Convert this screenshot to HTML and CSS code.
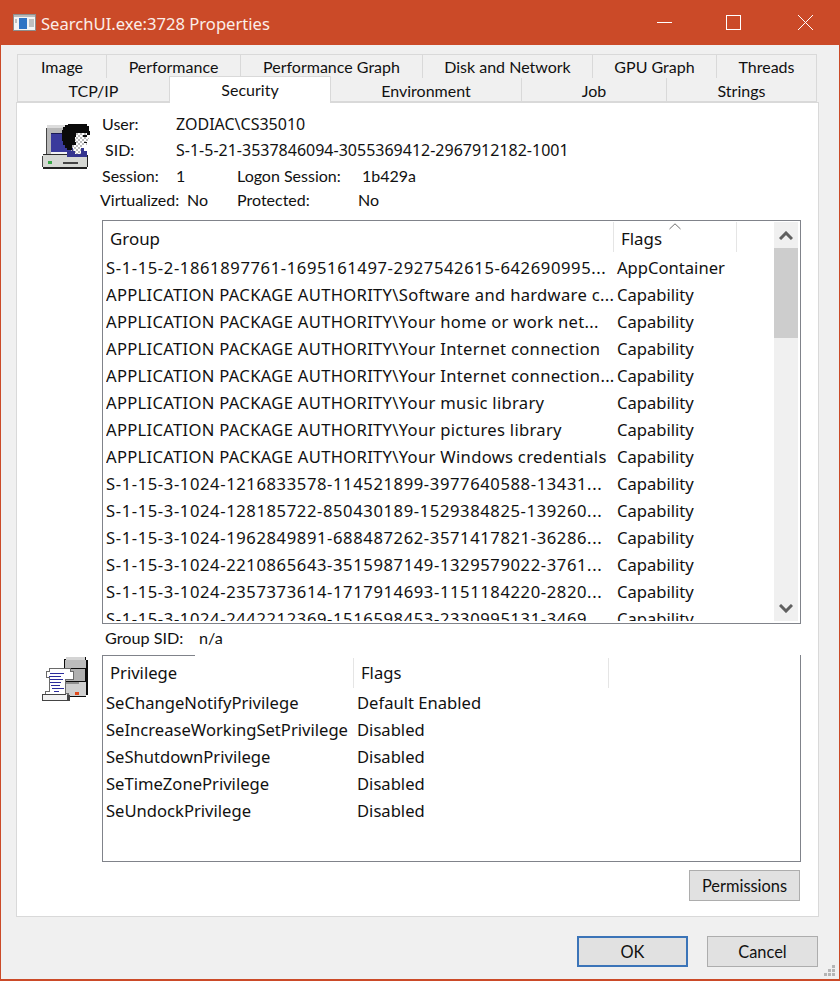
FILE: index.html
```html
<!DOCTYPE html>
<html lang="en">
<head>
<meta charset="utf-8">
<title>SearchUI.exe:3728 Properties</title>
<link rel="stylesheet" href="styles.css">
</head>
<body>
<div class="window">
  <header class="titlebar">
    <svg class="app-icon" width="24" height="18" viewBox="0 0 24 18">
      <rect x="0.5" y="0.5" width="22" height="16" fill="#f4f4f4" stroke="#8d8d8d"/>
      <rect x="1" y="1" width="21" height="2" fill="#b9b9b9"/>
      <rect x="6" y="4" width="8" height="11" fill="#2f74c4"/>
      <path d="M16 6h5M16 8h5M16 10h5M16 12h5M2 6h2M2 8h2" stroke="#8a8a8a"/>
    </svg>
    <span class="title">SearchUI.exe:3728 Properties</span>
    <svg class="controls" width="156" height="16" viewBox="0 0 156 16" fill="none" stroke="#fff">
      <path d="M0 7.5h15"/>
      <rect x="69.5" y="0.5" width="14" height="14"/>
      <path d="M141 0l15 15M156 0l-15 15"/>
    </svg>
  </header>

  <div class="content">
    <nav class="tabs">
      <div class="tab-row">
        <div class="tab w89">Image</div>
        <div class="tab w134">Performance</div>
        <div class="tab w182">Performance Graph</div>
        <div class="tab w170">Disk and Network</div>
        <div class="tab w124">GPU Graph</div>
        <div class="tab w101">Threads</div>
      </div>
      <div class="tab-row">
        <div class="tab w152">TCP/IP</div>
        <div class="tab tab-active w161">Security</div>
        <div class="tab w191">Environment</div>
        <div class="tab w145">Job</div>
        <div class="tab w150">Strings</div>
      </div>
    </nav>

    <section class="panel">
      <div class="top-section">
        <div class="icon-col">
          <svg class="user-icon" width="48" height="50" viewBox="0 0 48 50" shape-rendering="crispEdges">
            <defs>
              <pattern id="dither" width="4" height="4" patternUnits="userSpaceOnUse">
                <rect width="4" height="4" fill="#bdbdbd"/>
                <rect width="2" height="2" fill="#fff"/>
                <rect x="2" y="2" width="2" height="2" fill="#fff"/>
              </pattern>
            </defs>
            <rect x="5" y="5" width="27" height="30" fill="#b8b8b8"/>
            <rect x="5" y="4" width="27" height="3" fill="#dcdcdc"/>
            <rect x="4" y="7" width="1" height="28" fill="#444"/>
            <rect x="9" y="12" width="20" height="19" fill="#3a3a9c"/>
            <rect x="9" y="12" width="20" height="1" fill="#1b1b55"/>
            <rect x="9" y="31" width="20" height="2" fill="#f2f2f2"/>
            <rect x="1" y="33" width="44" height="14" fill="#d6d8d4"/>
            <rect x="1" y="33" width="44" height="1" fill="#2a2a2a"/>
            <rect x="1" y="46" width="44" height="2" fill="#222"/>
            <rect x="0" y="35" width="1" height="11" fill="#444"/>
            <rect x="45" y="34" width="1" height="12" fill="#222"/>
            <rect x="6" y="40" width="4" height="3" fill="#3aa84a"/>
            <rect x="21" y="41" width="15" height="2" fill="#444"/>
            <path d="M25 36h20v-6h-3v-3h-12v3h-5z" fill="#35358f"/>
            <path d="M26 3h19v2h2v5h1v4h-6v10h-12v5h-5v-2h-2v-3h-2v-4h-1v-11h1v-3h2v-2h3z" fill="#0b0b0b"/>
            <path d="M34 12h11v5h2v3h-2v4h-3v2h-3v7h-6v-3h-2v-4h3v-5h-1v-5h1z" fill="url(#dither)"/>
            <path d="M41 14h4v2h-4zM42 21h3v1h-3z" fill="#111"/>
          </svg>
        </div>
        <div class="info">
          <div class="info-row row-user"><span class="label lbl-user">User:</span><span class="val-big">ZODIAC\CS35010</span></div>
          <div class="info-row row-sid"><span class="label lbl-sid">SID:</span><span class="val-big">S-1-5-21-3537846094-3055369412-2967912182-1001</span></div>
          <div class="info-row row-session"><span class="label lbl-session">Session:</span><span class="val-session">1</span><span class="label lbl-logon">Logon Session:</span><span>1b429a</span></div>
          <div class="info-row row-virt"><span class="label lbl-virt">Virtualized:</span><span class="val-virt">No</span><span class="label lbl-prot">Protected:</span><span>No</span></div>
        </div>
      </div>

      <div class="group-box">
        <div class="list">
          <div class="list-head">
            <div class="th th-group">Group</div>
            <div class="th th-flags">Flags<svg class="sort" width="12" height="7" viewBox="0 0 12 7" fill="none" stroke="#6e6e6e"><path d="M0.5 6L6 0.8L11.5 6"/></svg></div>
          </div>
          <div class="list-body">
            <div class="row"><span class="cell-name sid-text">S-1-15-2-1861897761-1695161497-2927542615-642690995...</span><span>AppContainer</span></div>
            <div class="row"><span class="cell-name app-text">APPLICATION PACKAGE AUTHORITY\Software and hardware c...</span><span>Capability</span></div>
            <div class="row"><span class="cell-name app-text">APPLICATION PACKAGE AUTHORITY\Your home or work net...</span><span>Capability</span></div>
            <div class="row"><span class="cell-name app-text">APPLICATION PACKAGE AUTHORITY\Your Internet connection</span><span>Capability</span></div>
            <div class="row"><span class="cell-name app-text">APPLICATION PACKAGE AUTHORITY\Your Internet connection...</span><span>Capability</span></div>
            <div class="row"><span class="cell-name app-text">APPLICATION PACKAGE AUTHORITY\Your music library</span><span>Capability</span></div>
            <div class="row"><span class="cell-name app-text">APPLICATION PACKAGE AUTHORITY\Your pictures library</span><span>Capability</span></div>
            <div class="row"><span class="cell-name app-text">APPLICATION PACKAGE AUTHORITY\Your Windows credentials</span><span>Capability</span></div>
            <div class="row"><span class="cell-name sid-text">S-1-15-3-1024-1216833578-114521899-3977640588-13431...</span><span>Capability</span></div>
            <div class="row"><span class="cell-name sid-text">S-1-15-3-1024-128185722-850430189-1529384825-139260...</span><span>Capability</span></div>
            <div class="row"><span class="cell-name sid-text">S-1-15-3-1024-1962849891-688487262-3571417821-36286...</span><span>Capability</span></div>
            <div class="row"><span class="cell-name sid-text">S-1-15-3-1024-2210865643-3515987149-1329579022-3761...</span><span>Capability</span></div>
            <div class="row"><span class="cell-name sid-text">S-1-15-3-1024-2357373614-1717914693-1151184220-2820...</span><span>Capability</span></div>
            <div class="row"><span class="cell-name sid-text">S-1-15-3-1024-2442212369-1516598453-2330995131-3469...</span><span>Capability</span></div>
          </div>
        </div>
        <div class="scrollbar">
          <div class="sb-btn"><svg width="14" height="9" viewBox="0 0 14 9" fill="none" stroke="#606060" stroke-width="3"><path d="M1 8L7 2L13 8"/></svg></div>
          <div class="sb-thumb"></div>
          <div class="sb-track"></div>
          <div class="sb-btn"><svg width="14" height="9" viewBox="0 0 14 9" fill="none" stroke="#606060" stroke-width="3"><path d="M1 1L7 7L13 1"/></svg></div>
        </div>
      </div>

      <div class="group-sid"><span class="lbl-gsid">Group SID:</span><span>n/a</span></div>

      <div class="priv-section">
        <div class="icon-col">
          <svg class="priv-icon" width="48" height="48" viewBox="0 0 48 48" shape-rendering="crispEdges">
            <path d="M22 4h2v-2h20v3h2v35h-2v2h-22z" fill="#0c0c0c"/>
            <path d="M24 2h19v3h-19z" fill="#d4d4d4"/>
            <path d="M23 5h21v8h-21z" fill="#bcbcbc"/>
            <path d="M24 14h19v12h-19z" fill="#b0b0b0"/>
            <path d="M23 27h21v14h-21z" fill="#cfcfcf"/>
            <path d="M23 27h14v2h-14z" fill="#8f8f8f"/>
            <rect x="33" y="37" width="4" height="3" fill="#e04a1c"/>
            <path d="M7.5 13.5h21v3h3v8h-8v14h3v1h-23v-3h4v-14h-3v-6h3z" fill="#fff" stroke="#6a6a6a"/>
            <path d="M8 18h14M7 21h12M8 24h13M8 27h11M9 30h9M10 33h12M12 36h5" stroke="#2c2c9c"/>
            <path d="M1 39h24v6h-24z" fill="#f2f2f2"/>
            <path d="M0 39h24v1h-24zM0 45h28v1h-28zM0 40h1v5h-1zM25 40h3v5h-3z" fill="#444"/>
          </svg>
        </div>
        <div class="priv-box">
          <div class="priv-topline"></div>
          <div class="priv-head">
            <div class="th th-priv">Privilege</div>
            <div class="th th-pflags">Flags</div>
          </div>
          <div class="row"><span class="cell-priv">SeChangeNotifyPrivilege</span><span>Default Enabled</span></div>
          <div class="row"><span class="cell-priv">SeIncreaseWorkingSetPrivilege</span><span>Disabled</span></div>
          <div class="row"><span class="cell-priv">SeShutdownPrivilege</span><span>Disabled</span></div>
          <div class="row"><span class="cell-priv">SeTimeZonePrivilege</span><span>Disabled</span></div>
          <div class="row"><span class="cell-priv">SeUndockPrivilege</span><span>Disabled</span></div>
        </div>
      </div>

      <div class="perm-row"><button class="btn btn-perm">Permissions</button></div>
    </section>

    <footer class="footer">
      <button class="btn btn-ok">OK</button>
      <button class="btn btn-cancel">Cancel</button>
    </footer>
    <svg class="grip" width="12" height="12" viewBox="0 0 12 12" fill="#b5b5b5" shape-rendering="crispEdges">
      <path d="M8 0h3v3h-3zM4 4h3v3h-3zM8 4h3v3h-3zM0 8h3v3h-3zM4 8h3v3h-3zM8 8h3v3h-3z"/>
    </svg>
  </div>
</div>
</body>
</html>
```

FILE: styles.css
```css
* { box-sizing: border-box; }
html, body { margin: 0; padding: 0; background: #f0f0f0; }
body {
  font-family: "Noto Sans", "Open Sans", sans-serif;
  font-size: 16.6px;
  color: #111;
  width: 840px;
  height: 981px;
  overflow: hidden;
}
.window {
  position: relative;
  width: 840px;
  height: 981px;
  border: 1px solid #cb4a28;
  border-top: 0;
  border-bottom-width: 2px;
  background: #f0f0f0;
  display: flex;
  flex-direction: column;
}
.titlebar {
  height: 45px;
  margin: 0 -1px;
  background: #cb4a28;
  color: #fff;
  display: flex;
  align-items: center;
  padding-left: 13px;
  flex: none;
}
.app-icon { flex: none; margin-top: 1px; }
.title { font-size: 16.6px; margin-left: 4px; margin-top: 2px; flex: 1; color: #fbeee9; }
.controls { flex: none; margin-right: 27px; margin-top: 1px; }

.content { flex: 1; display: flex; flex-direction: column; padding: 9px 0 0 15px; position: relative; }
.tabs { padding-left: 1px; font-family: "Lato", "Noto Sans", sans-serif; font-size: 16px; }
.tab-row { display: flex; height: 24px; }
.tab {
  background: #f0f0f0;
  border: 1px solid #d9d9d9;
  border-right: 0;
  text-align: center;
  line-height: 24px;
  height: 25px;
}
.tab:last-child { border-right: 1px solid #d9d9d9; }
.tab-row:last-child .tab { height: 24px; border-top: 0; line-height: 26px; }
.tab-row:last-child .tab.tab-active {
  background: #fff;
  height: 27px;
  margin-top: -2px;
  border: 1px solid #d9d9d9;
  border-bottom: 0;
  position: relative;
  z-index: 2;
  line-height: 25px;
}
.tab-active + .tab { border-left: 0; }
.w89 { width: 89px; }
.w134 { width: 134px; }
.w182 { width: 182px; }
.w170 { width: 170px; }
.w124 { width: 124px; }
.w101 { width: 101px; }
.w152 { width: 152px; }
.w161 { width: 162px; }
.w191 { width: 190px; }
.w145 { width: 145px; }
.w150 { width: 151px; }

.panel {
  width: 803px;
  height: 815px;
  background: #fff;
  border: 1px solid #d9d9d9;
  padding: 0 0 0 25px;
  display: flex;
  flex-direction: column;
  flex: none;
}
.top-section { display: flex; height: 117px; }
.icon-col { width: 60px; flex: none; }
.user-icon { display: block; margin-top: 18px; }
.info { padding-top: 8px; font-family: "Lato", "Noto Sans", sans-serif; font-size: 16px; }
.val-big { font-family: "Noto Sans", sans-serif; font-size: 16px; }
.info-row { display: flex; line-height: 26px; white-space: nowrap; }
.row-virt { margin-top: -2px; margin-left: -2px; }
.lbl-user { width: 74px; }
.lbl-sid { width: 71px; margin-left: 3px; }
.lbl-session { width: 74px; }
.val-session { width: 61px; }
.lbl-logon { width: 125px; }
.lbl-virt { width: 87px; }
.val-virt { width: 50px; }
.lbl-prot { width: 121px; }

.group-box {
  margin-left: 60px;
  width: 699px;
  height: 404px;
  border: 1px solid #80838a;
  display: flex;
  padding: 1px 2px 2px 0;
  flex: none;
}
.list { flex: 1; min-width: 0; display: flex; flex-direction: column; overflow: hidden; }
.list-head { display: flex; height: 32px; flex: none; }
.th { line-height: 33px; padding-left: 7px; border-right: 1px solid #e5e5e5; height: 30px; }
.th-group { width: 511px; font-size: 16.9px; }
.th-flags { width: 123px; position: relative; padding-left: 7px; font-size: 16.9px; }
.sort { position: absolute; left: 55px; top: 1px; }
.list-body { flex: 1; overflow: hidden; }
.row { display: flex; height: 27px; line-height: 27px; white-space: nowrap; padding-left: 3px; }
.cell-name { width: 511px; flex: none; overflow: hidden; }
.sid-text { letter-spacing: 0.6px; }
.app-text { letter-spacing: 0.3px; }
.scrollbar { width: 24px; flex: none; display: flex; flex-direction: column; background: #f0f0f0; }
.sb-btn { height: 26px; display: flex; align-items: center; justify-content: center; flex: none; }
.sb-thumb { height: 90px; background: #cdcdcd; flex: none; }
.sb-track { flex: 1; }

.group-sid { margin-left: 62px; height: 31px; line-height: 27px; display: flex; flex: none; font-family: "Lato", "Noto Sans", sans-serif; font-size: 16.2px; }
.lbl-gsid { width: 94px; margin-left: 1px; }

.priv-section { display: flex; flex: none; }
.priv-icon { display: block; margin-top: 0; }
.priv-box {
  position: relative;
  width: 699px;
  height: 207px;
  border: 1px solid #80838a;
  border-top: 0;
}
.priv-topline { position: absolute; left: -1px; top: 0; width: 93px; height: 1px; background: #80838a; }
.priv-head { display: flex; height: 34px; padding-top: 3px; }
.priv-head .th { height: 30px; line-height: 30px; }
.th-priv { width: 251px; }
.th-pflags { width: 255px; padding-left: 7px; }
.priv-box .cell-priv { width: 251px; flex: none; }

.perm-row { display: flex; justify-content: flex-end; padding: 8px 18px 0 0; }
.btn {
  font: inherit;
  font-family: "Lato", "Noto Sans", sans-serif;
  font-size: 16.4px;
  color: inherit;
  background: #e1e1e1;
  border: 1.5px solid #adadad;
  padding: 0;
  width: 111px;
}
.btn-perm { height: 31px; }
.footer { display: flex; padding: 19px 0 0 561px; gap: 19px; }
.btn-ok, .btn-cancel { height: 31px; }
.btn-ok { border: 2px solid #3b74b8; }
.grip { position: absolute; right: 3px; bottom: 2px; }
```
